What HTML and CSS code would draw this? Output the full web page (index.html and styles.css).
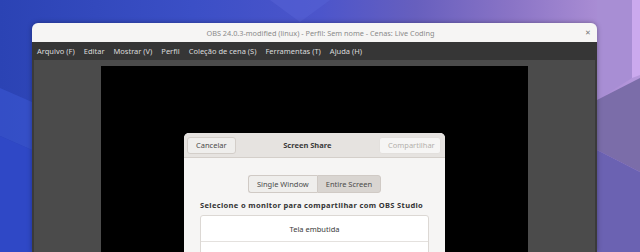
FILE: index.html
```html
<!DOCTYPE html>
<html lang="pt-BR">
<head>
    <meta charset="UTF-8">
    <meta name="viewport" content="width=device-width, initial-scale=1.0">
    <title>OBS Screen Share</title>
    <link rel="stylesheet" href="styles.css">
</head>
<body>
    <svg class="wallpaper" width="640" height="252" viewBox="0 0 640 252">
        <defs>
            <linearGradient id="sky" x1="0" y1="0" x2="1" y2="0">
                <stop offset="0" stop-color="#2b43b4"/>
                <stop offset="0.3" stop-color="#3b4fc6"/>
                <stop offset="0.5" stop-color="#4c55cb"/>
                <stop offset="0.65" stop-color="#675fbe"/>
                <stop offset="0.8" stop-color="#8a74c6"/>
                <stop offset="0.92" stop-color="#a68ad2"/>
                <stop offset="1" stop-color="#b698dc"/>
            </linearGradient>
        </defs>
        <rect width="640" height="252" fill="url(#sky)"/>
        <polygon points="0,88 32,102 32,150 0,136" fill="#3a56d2" opacity="0.6"/>
        <polygon points="0,136 32,150 32,252 0,252" fill="#2f48c6"/>
        <polygon points="270,0 330,0 300,22" fill="#5560d4" opacity="0.6"/>
        <polygon points="597,0 632,0 632,78 597,100" fill="#a88ed4"/>
        <polygon points="632,0 640,0 640,75 632,78" fill="#cba9ee"/>
        <polygon points="597,100 640,78 640,172 597,150" fill="#7b6da9"/>
        <polygon points="597,150 640,172 640,252 597,252" fill="#6b62b2"/>
    </svg>
    <div class="desktop">
        <div class="window">
            <div class="titlebar">
                <span class="title">OBS 24.0.3-modified (linux) - Perfil: Sem nome - Cenas: Live Coding</span>
                <span class="close">&#x2715;</span>
            </div>
            <div class="menubar">
                <span class="menu-item">Arquivo (F)</span>
                <span class="menu-item">Editar</span>
                <span class="menu-item">Mostrar (V)</span>
                <span class="menu-item">Perfil</span>
                <span class="menu-item">Coleção de cena (S)</span>
                <span class="menu-item">Ferramentas (T)</span>
                <span class="menu-item">Ajuda (H)</span>
            </div>
            <div class="content">
                <div class="preview">
                    <div class="dialog">
                        <div class="dialog-header">
                            <button class="btn">Cancelar</button>
                            <span class="dialog-title">Screen Share</span>
                            <button class="btn disabled">Compartilhar</button>
                        </div>
                        <div class="dialog-body">
                            <div class="toggle">
                                <button class="toggle-btn">Single Window</button>
                                <button class="toggle-btn active">Entire Screen</button>
                            </div>
                            <div class="label">Selecione o monitor para compartilhar com OBS Studio</div>
                            <div class="list">
                                <div class="row">Tela embutida</div>
                                <div class="row">LG Electronics 27"</div>
                            </div>
                        </div>
                    </div>
                </div>
            </div>
        </div>
    </div>
</body>
</html>
```

FILE: styles.css
```css
body {
    margin: 0;
    width: 640px;
    height: 252px;
    overflow: hidden;
    position: relative;
    font-family: 'Noto Sans', 'Open Sans', sans-serif;
    background-color: #4c55cb;
}
.wallpaper {
    position: absolute;
    left: 0;
    top: 0;
    display: block;
}
.desktop {
    position: relative;
    padding: 23px 43px 0 32px;
    height: 229px;
}
.window {
    height: 100%;
    display: flex;
    flex-direction: column;
    border-radius: 6px 6px 0 0;
    overflow: hidden;
    box-shadow: 0 0 5px rgba(0, 0, 0, 0.35);
}
.titlebar {
    height: 19px;
    background-color: #f6f5f4;
    display: flex;
    align-items: center;
    justify-content: center;
    position: relative;
}
.title {
    font-size: 7.3px;
    color: #8a8a8a;
    margin-left: 12px;
}
.close {
    position: absolute;
    right: 6px;
    top: 5px;
    font-size: 7px;
    color: #777;
}
.menubar {
    height: 18px;
    background-color: #363636;
    display: flex;
    align-items: center;
    gap: 9px;
    padding-left: 5px;
}
.menu-item {
    font-size: 7.5px;
    color: #dcdcdc;
}
.content {
    flex: 1;
    background-color: #4b4b4b;
    border-left: 2px solid #3a3a3a;
    border-right: 2px solid #3a3a3a;
    padding: 6px 67px 0 67px;
    display: flex;
}
.preview {
    flex: 1;
    background-color: #000;
    position: relative;
}
.dialog {
    position: absolute;
    left: 83px;
    top: 67px;
    width: 261px;
    border-radius: 5px 5px 0 0;
    overflow: hidden;
    background-color: #f6f5f4;
    box-shadow: 0 0 4px rgba(0, 0, 0, 0.6);
}
.dialog-header {
    height: 24px;
    background-color: #e6e3e0;
    border-bottom: 1px solid #d4cfca;
    display: flex;
    align-items: center;
    justify-content: space-between;
    padding: 0 4px 0 3px;
}
.btn {
    height: 17px;
    padding: 0 8px;
    font-family: inherit;
    font-size: 7.5px;
    color: #4a4a4a;
    background-color: #efeeec;
    border: 1px solid #d3cec9;
    border-radius: 3px;
}
.btn.disabled {
    color: #b4b0ac;
    background-color: #f6f5f4;
    border-color: #e3e0dd;
    width: 62px;
}
.dialog-title {
    font-size: 7.5px;
    font-weight: bold;
    color: #3a3a3a;
}
.dialog-body {
    padding: 17px 16px 0 16px;
    height: 100px;
}
.toggle {
    display: flex;
    justify-content: center;
}
.toggle-btn {
    height: 18px;
    font-family: inherit;
    font-size: 7.5px;
    color: #4a4a4a;
    background-color: #efeeec;
    border: 1px solid #d0cac5;
    padding: 0 8px;
}
.toggle-btn:first-child {
    border-radius: 3px 0 0 3px;
    border-right: none;
}
.toggle-btn.active {
    background-color: #d9d5d1;
    border-radius: 0 3px 3px 0;
}
.label {
    font-size: 7.5px;
    font-weight: bold;
    letter-spacing: 0.35px;
    color: #333;
    margin-top: 7px;
}
.list {
    margin-top: 5px;
    background-color: #fff;
    border: 1px solid #dcd8d4;
    border-radius: 3px;
}
.row {
    height: 25px;
    display: flex;
    align-items: center;
    justify-content: center;
    font-size: 7.5px;
    color: #3a3a3a;
    border-bottom: 1px solid #e4e1de;
}
```
